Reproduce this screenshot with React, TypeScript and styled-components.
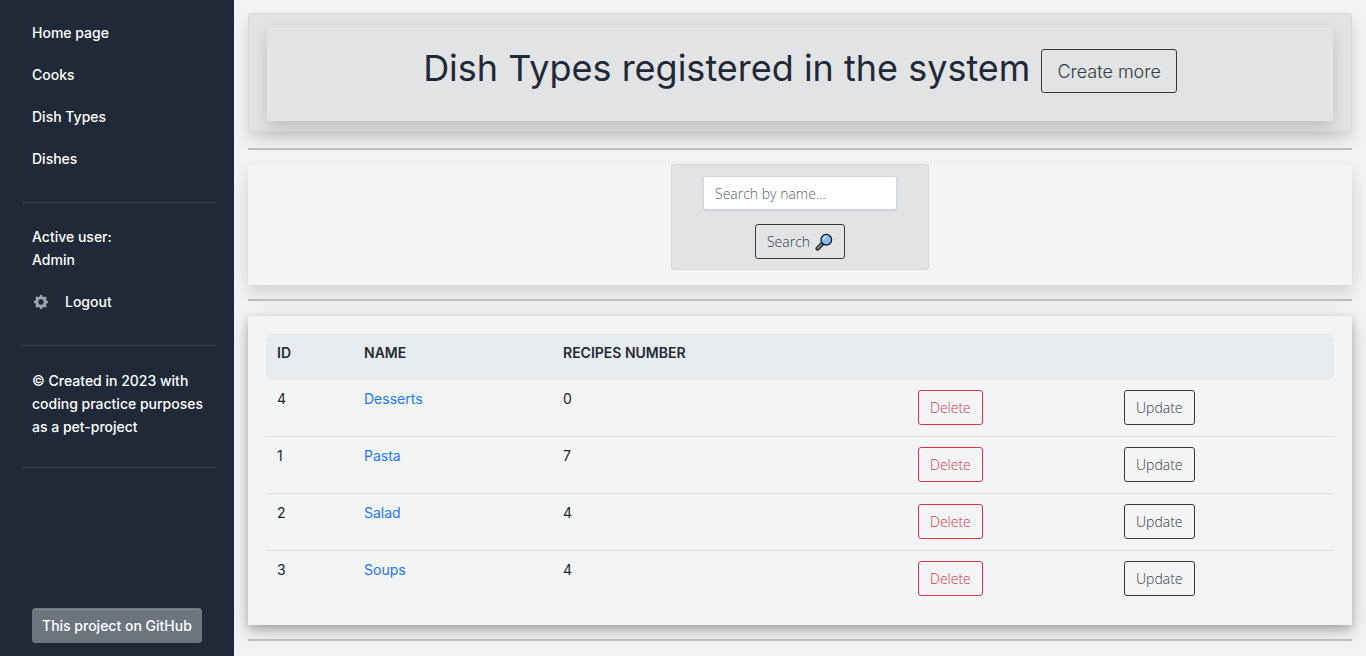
import React from "react";
import styled, { createGlobalStyle } from "styled-components";

const GlobalStyle = createGlobalStyle`
  *, *::before, *::after { box-sizing: border-box; }
  body {
    margin: 0;
    background: #f2f4f6;
    color: #1f2937;
    font-family: Inter, "Liberation Sans", sans-serif;
    font-size: 14px;
    line-height: 23px;
    font-optical-sizing: none;
  }
`;

const Page = styled.div`
  display: flex;
  min-height: 100vh;
`;

const Sidebar = styled.nav`
  position: relative;
  z-index: 1;
  flex: 0 0 234px;
  display: flex;
  flex-direction: column;
  padding: 12px 18px 13px 22px;
  background: #1f2937;
  color: #fff;
  font-weight: 500;
`;

const NavList = styled.ul`
  list-style: none;
  margin: 0;
  padding: 0;
`;

const NavItem = styled.li`
  padding: 9px 10px 10px;
`;

const NavLink = styled.a`
  display: flex;
  align-items: center;
  color: inherit;
  text-decoration: none;
`;

const GearIcon = styled.svg`
  width: 18px;
  height: 18px;
  margin-right: 15px;
  fill: #9ca3af;
`;

const NavText = styled.p`
  margin: 0;
  padding: 9px 10px 10px;
`;

const Copyright = styled(NavText)`
  padding: 10px 10px 7px;
`;

const SideRule = styled.hr`
  width: 100%;
  margin: 22px 0 13px;
  border: 0;
  border-top: 1px solid #374151;
`;

const GithubLink = styled.a`
  align-self: flex-start;
  margin: auto 0 0 10px;
  padding: 5px 9px;
  border: 1px solid #6c757d;
  border-radius: 3px;
  background: #6c757d;
  box-shadow: inset 0 1px 0 rgba(255, 255, 255, 0.15);
  color: #fff;
  text-decoration: none;
`;

const Main = styled.main`
  flex: 1;
  min-width: 0;
  padding: 13px 14px 0;
`;

const Rule = styled.hr`
  margin: 14px 0 15px;
  border: 0;
  border-top: 2px solid #bbbdc0;
`;

const HeaderRule = styled(Rule)`
  margin: 16px 0 14px;
`;

const HeaderCard = styled.header`
  padding: 11px 18px 10px;
  border: 1px solid #d5d7da;
  border-radius: 3px;
  background: #e1e3e5;
  box-shadow: 0 8px 16px rgba(0, 0, 0, 0.15);
`;

const HeaderInner = styled.div`
  display: flex;
  justify-content: center;
  align-items: flex-start;
  gap: 11px;
  padding: 24px 18px 28px;
  background: #e1e3e5;
  box-shadow: 0 8px 16px rgba(0, 0, 0, 0.15);
`;

const Title = styled.h1`
  margin: 0;
  font-size: 36px;
  font-weight: 400;
  line-height: 38px;
`;

const Button = styled.button<{ $tone?: "dark" | "danger" }>`
  height: 35px;
  padding: 0 11px;
  border: 1px solid ${(p) => (p.$tone === "danger" ? "#dc3545" : "#343a40")};
  border-radius: 3px;
  background: transparent;
  color: ${(p) => (p.$tone === "danger" ? "#dc3545" : "#343a40")};
  font: 350 14px/21px "Open Sans", "Noto Sans", sans-serif;
`;

const LargeButton = styled(Button)`
  height: 44px;
  padding: 0 15px;
  font: 300 18px/27px Inter, sans-serif;
  font-optical-sizing: none;
`;

const SearchPanel = styled.section`
  display: flex;
  justify-content: center;
  padding-bottom: 15px;
  background: #f2f4f6;
  box-shadow: 0 8px 16px rgba(0, 0, 0, 0.15);
`;

const SearchForm = styled.form`
  display: flex;
  flex-direction: column;
  align-items: center;
  gap: 14px;
  width: 258px;
  padding: 11px 0 10px;
  border: 1px solid #d5d7da;
  border-radius: 3px;
  background: #e1e3e5;
`;

const SearchInput = styled.input`
  width: 194px;
  height: 34px;
  padding: 0 11px;
  border: 1px solid #d1d7e0;
  border-radius: 3px;
  background: #fff;
  box-shadow: 0 1px 2px rgba(46, 54, 80, 0.1);
  font: 350 14px/21px "Open Sans", "Noto Sans", sans-serif;
  &::placeholder { color: #59626a; opacity: 1; }
`;

const SearchButton = styled(Button)`
  display: flex;
  align-items: center;
  gap: 5px;
`;

const Lens = styled.svg`
  width: 18px;
  height: 18px;
`;

const TablePanel = styled.section`
  padding: 18px 18px 17px;
  background: #f2f4f6;
  box-shadow: 0 4px 8px rgba(0, 0, 0, 0.2), 0 6px 20px rgba(0, 0, 0, 0.19);
`;

const Table = styled.table`
  width: 100%;
  table-layout: fixed;
  border-collapse: separate;
  border-spacing: 0;
`;

const Column = styled.col<{ $w: number }>`
  width: ${(p) => p.$w}px;
`;

const Head = styled.th`
  height: 46px;
  padding: 7px 11px;
  background: #e7ebee;
  text-align: left;
  vertical-align: top;
  font-weight: 600;
  &:first-child { border-radius: 7px 0 0 7px; }
  &:last-child { border-radius: 0 7px 7px 0; }
`;

const Row = styled.tr`
  &:not(:last-child) > td { border-bottom: 1px solid #dee0e3; }
`;

const Cell = styled.td`
  height: 57px;
  padding: 7px 11px;
  vertical-align: top;
  color: #212529;
`;

const ActionCell = styled(Cell)`
  padding-top: 10px;
`;

const DishLink = styled.a`
  color: #1a78ff;
  text-decoration: none;
`;

const dishTypes = [
  { id: 4, name: "Desserts", recipes: 0 },
  { id: 1, name: "Pasta", recipes: 7 },
  { id: 2, name: "Salad", recipes: 4 },
  { id: 3, name: "Soups", recipes: 4 },
];

const links = ["Home page", "Cooks", "Dish Types", "Dishes"];

export default function App() {
  return (
    <>
      <GlobalStyle />
      <Page>
        <Sidebar>
          <NavList>
            {links.map((label) => (
              <NavItem key={label}>
                <NavLink href="#">{label}</NavLink>
              </NavItem>
            ))}
          </NavList>
          <SideRule />
          <NavText>
            Active user:
            <br />
            Admin
          </NavText>
          <NavList>
            <NavItem>
              <NavLink href="#">
                <GearIcon viewBox="0 0 20 20" aria-hidden="true">
                  <path
                    fillRule="evenodd"
                    d="M11.49 3.17c-.38-1.56-2.6-1.56-2.98 0a1.532 1.532 0 01-2.286.948c-1.372-.836-2.942.734-2.106 2.106.54.886.061 2.042-.947 2.287-1.561.379-1.561 2.6 0 2.978a1.532 1.532 0 01.947 2.287c-.836 1.372.734 2.942 2.106 2.106a1.532 1.532 0 012.287.947c.379 1.561 2.6 1.561 2.978 0a1.533 1.533 0 012.287-.947c1.372.836 2.942-.734 2.106-2.106a1.533 1.533 0 01.947-2.287c1.561-.379 1.561-2.6 0-2.978a1.532 1.532 0 01-.947-2.287c.836-1.372-.734-2.942-2.106-2.106a1.532 1.532 0 01-2.287-.947zM10 13a3 3 0 100-6 3 3 0 000 6z"
                    clipRule="evenodd"
                  />
                </GearIcon>
                Logout
              </NavLink>
            </NavItem>
          </NavList>
          <SideRule />
          <Copyright>© Created in 2023 with coding practice purposes as a pet-project</Copyright>
          <SideRule />
          <GithubLink href="#">This project on GitHub</GithubLink>
        </Sidebar>
        <Main>
          <HeaderCard>
            <HeaderInner>
              <Title>Dish Types registered in the system</Title>
              <LargeButton type="button">Create more</LargeButton>
            </HeaderInner>
          </HeaderCard>
          <HeaderRule />
          <SearchPanel>
            <SearchForm onSubmit={(e) => e.preventDefault()}>
              <SearchInput type="text" placeholder="Search by name..." aria-label="Search by name" />
              <SearchButton type="submit">
                Search
                <Lens viewBox="0 0 18 18" aria-hidden="true">
                  <path d="M2.6 15.4 7.6 10.4" stroke="#15191c" strokeWidth="4.2" strokeLinecap="round" />
                  <path d="M2.7 15.3 6.6 11.4" stroke="#7d8a8c" strokeWidth="2" strokeLinecap="round" />
                  <circle cx="11.3" cy="6.7" r="5.3" fill="#83bdf0" stroke="#15191c" strokeWidth="1.3" />
                  <path d="M7.6 8a4.3 4.3 0 0 1 5.1-5.1Z" fill="#b9dcfa" />
                </Lens>
              </SearchButton>
            </SearchForm>
          </SearchPanel>
          <Rule />
          <TablePanel>
            <Table>
              <colgroup>
                <Column $w={87} />
                <Column $w={199} />
                <Column $w={355} />
                <Column $w={206} />
                <Column $w={221} />
              </colgroup>
              <thead>
                <tr>
                  <Head scope="col">ID</Head>
                  <Head scope="col">NAME</Head>
                  <Head scope="col">RECIPES NUMBER</Head>
                  <Head />
                  <Head />
                </tr>
              </thead>
              <tbody>
                {dishTypes.map((dish) => (
                  <Row key={dish.id}>
                    <Cell>{dish.id}</Cell>
                    <Cell>
                      <DishLink href="#">{dish.name}</DishLink>
                    </Cell>
                    <Cell>{dish.recipes}</Cell>
                    <ActionCell>
                      <Button type="button" $tone="danger">Delete</Button>
                    </ActionCell>
                    <ActionCell>
                      <Button type="button">Update</Button>
                    </ActionCell>
                  </Row>
                ))}
              </tbody>
            </Table>
          </TablePanel>
          <Rule />
        </Main>
      </Page>
    </>
  );
}
